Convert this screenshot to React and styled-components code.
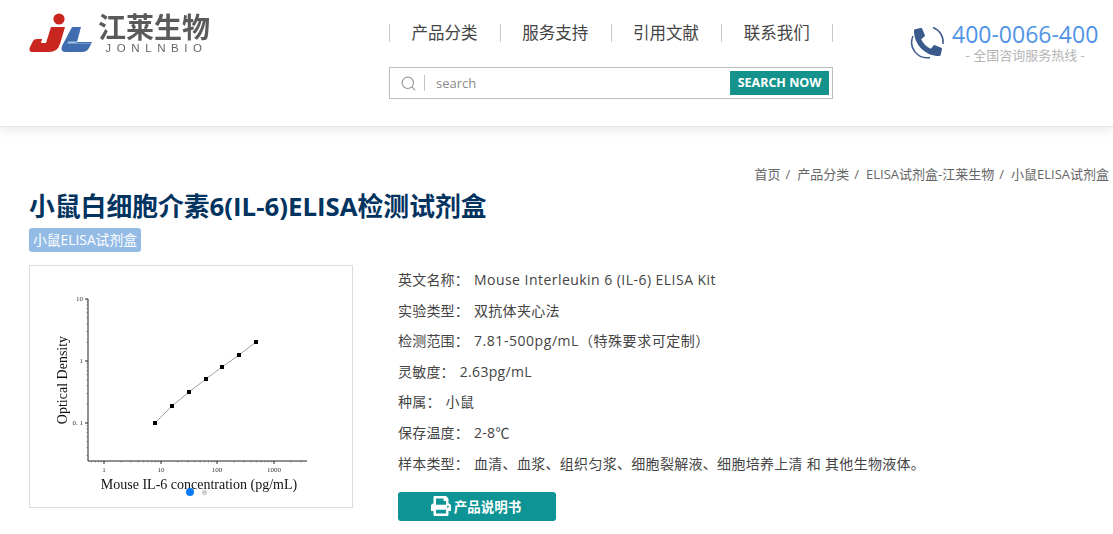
import React from 'react'
import styled, { createGlobalStyle } from 'styled-components'
import { Search } from 'lucide-react'
import { FaPhoneAlt, FaPrint } from 'react-icons/fa'

const Global = createGlobalStyle`
  html, body { margin: 0; padding: 0; background: #fff; }
  body { font-family: "Open Sans", "Noto Sans CJK SC", sans-serif; color: #333; overflow: hidden; }
  * { box-sizing: border-box; }
`

const navItems = ['产品分类', '服务支持', '引用文献', '联系我们']
const crumbs = ['首页', '产品分类', 'ELISA试剂盒-江莱生物']
const specs = [
  ['英文名称：', 'Mouse Interleukin 6 (IL-6) ELISA Kit', 0.46],
  ['实验类型：', '双抗体夹心法', 0.3],
  ['检测范围：', '7.81-500pg/mL（特殊要求可定制）', 0.55],
  ['灵敏度：', '2.63pg/mL', 0.3],
  ['种属：', '小鼠', 0.3],
  ['保存温度：', '2-8℃', 0.3],
  ['样本类型：', '血清、血浆、组织匀浆、细胞裂解液、细胞培养上清 和 其他生物液体。', 0.3],
]
const points = [[155, 423], [172, 406], [189, 392], [206, 379], [222, 367], [239, 355], [256, 342]]
const xTicks = [[104, '1'], [161, '10'], [217, '100'], [274, '1000']]
const yTicks = [[299, '10'], [361, '1'], [423, '0. 1']]
const logSteps = [2, 3, 4, 5, 6, 7, 8, 9].map(n => Math.log10(n))
const xMinor = [-1, 0, 1, 2, 3].flatMap(d => logSteps.map(s => 104 + (d + s) * 56.6)).filter(x => x > 88 && x < 307)
const yMinor = [-2, -1, 0].flatMap(d => logSteps.map(s => 361 - (d + s + 0) * 62)).filter(y => y > 299 && y < 461)

const App = () => (
  <>
    <Global />
    <Header>
      <Logo>
        <LogoMark viewBox="0 0 64 40">
          <circle cx="30" cy="6" r="5.6" fill="#c9261f" />
          <path d="M22 14H36L31 31Q28.500 39 20 39H4Q-1 39 1 34L4 28Q5 26 8 26H13L12 30H17Z" fill="#c9261f" />
          <path d="M43 14H52L48 29H63L60 35Q58 39 53 39H37Q31 39 33 33Z" fill="#3f6db0" />
          <path d="M39 28.500H48L47.500 30H63L62.500 30.500H38.500Z" fill="#a9c2e2" />
        </LogoMark>
        <LogoText>
          <LogoName>江莱生物</LogoName>
          <LogoLatin>JONLNBIO</LogoLatin>
        </LogoText>
      </Logo>
      <Middle>
        <Nav>
          {navItems.map(item => <NavItem key={item}>{item}</NavItem>)}
        </Nav>
        <SearchBox>
          <SearchIcon><Search size={17} strokeWidth={1.6} /></SearchIcon>
          <SearchInput placeholder="search" />
          <SearchButton>SEARCH NOW</SearchButton>
        </SearchBox>
      </Middle>
      <Phone>
        <PhoneIcon>
          <svg width="36" height="36" viewBox="0 0 36 36" fill="none">
            <path d="M23 3.500A15.500 15.500 0 0 1 33 20" stroke="#3f5d8c" strokeWidth="1.500" />
            <path d="M3 12A15.500 15.500 0 0 0 20 33.500" stroke="#3f5d8c" strokeWidth="1.500" />
          </svg>
          <PhoneGlyph><FaPhoneAlt size={28} /></PhoneGlyph>
        </PhoneIcon>
        <PhoneText>
          <PhoneNumber>400-0066-400</PhoneNumber>
          <PhoneNote>- 全国咨询服务热线 -</PhoneNote>
        </PhoneText>
      </Phone>
    </Header>

    <Content>
      <Breadcrumb>
        {crumbs.map(c => <Crumb key={c}>{c}<Slash>/</Slash></Crumb>)}
        <Crumb>小鼠ELISA试剂盒</Crumb>
      </Breadcrumb>
      <Title>小鼠白细胞介素6(IL-6)ELISA检测试剂盒</Title>
      <Tag>小鼠ELISA试剂盒</Tag>
      <Product>
        <ImageCard>
          <Chart width="322" height="241" viewBox="30 266 322 241">
            <line x1="88" y1="299" x2="88" y2="461" stroke="#222" />
            <line x1="88" y1="461" x2="307" y2="461" stroke="#222" />
            {yMinor.map(y => <line key={y} x1="86.500" y1={y} x2="88" y2={y} stroke="#555" strokeWidth="0.600" />)}
            {xMinor.map(x => <line key={x} x1={x} y1="461" x2={x} y2="462.500" stroke="#555" strokeWidth="0.600" />)}
            {yTicks.map(([y, label]) => (
              <g key={label}>
                <line x1="85" y1={y} x2="88" y2={y} stroke="#222" />
                <ChartSmall x="83" y={y + 2} textAnchor="end">{label}</ChartSmall>
              </g>
            ))}
            {xTicks.map(([x, label]) => (
              <g key={label}>
                <line x1={x} y1="461" x2={x} y2="464" stroke="#222" />
                <ChartSmall x={x} y="472" textAnchor="middle">{label}</ChartSmall>
              </g>
            ))}
            <polyline points={points.map(p => p.join(',')).join(' ')} fill="none" stroke="#888" strokeWidth="0.800" />
            {points.map(([x, y]) => <rect key={x} x={x - 2} y={y - 2} width="4" height="4" fill="#000" />)}
            <ChartLabel x="67" y="380" textAnchor="middle" transform="rotate(-90 67 380)">Optical Density</ChartLabel>
            <ChartLabel x="199" y="489" textAnchor="middle">Mouse IL-6 concentration (pg/mL)</ChartLabel>
          </Chart>
          <Dots>
            <Dot $active />
            <Dot />
          </Dots>
        </ImageCard>
        <Specs>
          {specs.map(([label, value, spacing]) => (
            <SpecRow key={label}>
              <SpecLabel>{label}</SpecLabel>
              <SpecValue $spacing={spacing}>{value}</SpecValue>
            </SpecRow>
          ))}
          <ManualButton><FaPrint size={20} />产品说明书</ManualButton>
        </Specs>
      </Product>
    </Content>
  </>
)

export default App

const Header = styled.header`
  display: flex;
  height: 127px;
  padding-left: 29px;
  border-bottom: 1px solid #e6e6e6;
  box-shadow: 0 3px 10px rgba(0, 0, 0, 0.09);
`

const Logo = styled.div`
  display: flex;
  align-items: flex-start;
  width: 360px;
  padding-top: 13px;
  gap: 5px;
  filter: blur(0.4px);
`

const LogoMark = styled.svg`
  width: 64px;
  height: 40px;
  flex: none;
`

const LogoText = styled.div`
  display: flex;
  flex-direction: column;
  align-items: center;
`

const LogoName = styled.div`
  font-size: 28px;
  line-height: 29px;
  font-weight: 700;
  color: #5a5a5a;
`

const LogoLatin = styled.div`
  font-family: "Liberation Sans", sans-serif;
  font-size: 11.500px;
  line-height: 13px;
  letter-spacing: 5.600px;
  margin-right: -5px;
  color: #666;
`

const Middle = styled.div`
  width: 444px;
  padding-top: 24px;
`

const Nav = styled.nav`
  display: flex;
  height: 18px;
  border-right: 1px solid #c8c8c8;
`

const NavItem = styled.a`
  flex: 1;
  padding-right: 1px;
  border-left: 1px solid #c8c8c8;
  text-align: center;
  font-size: 16.500px;
  line-height: 18px;
  color: #444;
`

const SearchBox = styled.div`
  display: flex;
  align-items: center;
  height: 32px;
  margin-top: 25px;
  padding: 0 3px 0 10px;
  border: 1px solid #bdbdbd;
`

const SearchIcon = styled.span`
  display: flex;
  align-items: center;
  height: 16px;
  padding-right: 7px;
  border-right: 1px solid #c4c4c4;
  color: #999;
`

const SearchInput = styled.input`
  flex: 1;
  min-width: 0;
  height: 24px;
  padding: 0 0 0 11px;
  border: 0;
  outline: 0;
  font: 13px "Open Sans", sans-serif;
  &::placeholder { color: #8a8a8a; opacity: 1; }
`

const SearchButton = styled.button`
  width: 99px;
  height: 24px;
  padding: 0 0 2px;
  border: 0;
  background: #14938c;
  color: #fff;
  font: 700 12.500px "Open Sans", sans-serif;
`

const Phone = styled.div`
  display: flex;
  margin-left: 77px;
  padding-top: 23px;
  gap: 6px;
`

const PhoneIcon = styled.div`
  position: relative;
  width: 36px;
  height: 36px;
  margin-top: 1px;
`

const PhoneGlyph = styled.span`
  position: absolute;
  left: 4px;
  top: 4px;
  display: flex;
  color: #3a5a8c;
`

const PhoneText = styled.div`
  text-align: center;
`

const PhoneNumber = styled.div`
  font-size: 23px;
  line-height: 22px;
  color: #4f94e6;
`

const PhoneNote = styled.div`
  font-size: 13px;
  line-height: 19px;
  margin-top: 1px;
  color: #b5b5b5;
`

const Content = styled.main`
  padding: 38px 4px 0 29px;
`

const Breadcrumb = styled.div`
  display: flex;
  justify-content: flex-end;
  gap: 7px;
  font-size: 13px;
  line-height: 18px;
  color: #666;
`

const Crumb = styled.span`
  display: inline-flex;
`

const Slash = styled.span`
  margin-left: 5px;
`

const Title = styled.h1`
  margin: 6px 0 0;
  font-size: 25.800px;
  line-height: 34px;
  font-weight: 700;
  color: #03335f;
`

const Tag = styled.span`
  display: inline-block;
  margin-top: 5px;
  padding: 0 4px;
  height: 24px;
  border-radius: 3px;
  background: #94bbe6;
  color: #fff;
  font-size: 13.800px;
  line-height: 23px;
`

const Product = styled.div`
  display: flex;
  margin-top: 13px;
`

const ImageCard = styled.div`
  position: relative;
  width: 324px;
  height: 243px;
  border: 1px solid #dcdcdc;
  flex: none;
`

const Chart = styled.svg`
  display: block;
  filter: blur(0.3px);
`

const ChartLabel = styled.text`
  font-family: "Liberation Serif", serif;
  font-size: 14px;
  fill: #111;
`

const ChartSmall = styled.text`
  font-family: "Liberation Serif", serif;
  font-size: 7px;
  fill: #333;
`

const Dots = styled.div`
  position: absolute;
  left: 156px;
  top: 222px;
  display: flex;
  align-items: center;
  gap: 8px;
`

const Dot = styled.span`
  width: ${p => (p.$active ? 8 : 5)}px;
  height: ${p => (p.$active ? 8 : 5)}px;
  border-radius: 50%;
  background: ${p => (p.$active ? '#0a7bf5' : '#cfcfcf')};
`

const Specs = styled.div`
  margin-left: 45px;
  padding-top: 5px;
`

const SpecRow = styled.div`
  font-size: 14px;
  line-height: 20px;
  margin-bottom: 10.600px;
  letter-spacing: 0.2px;
  color: #444;
`

const SpecLabel = styled.span`
  margin-right: 5px;
`

const SpecValue = styled.span`
  letter-spacing: ${p => p.$spacing}px;
`

const ManualButton = styled.a`
  display: flex;
  align-items: center;
  justify-content: center;
  gap: 3px;
  width: 158px;
  height: 29px;
  margin-top: 18px;
  padding-right: 2px;
  border-radius: 3px;
  background: #0e9494;
  color: #fff;
  font-size: 13.500px;
  font-weight: 700;
`
